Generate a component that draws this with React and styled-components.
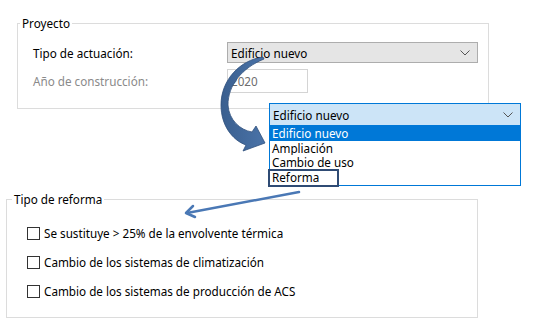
import React from "react";
import styled, { createGlobalStyle } from "styled-components";

const Global = createGlobalStyle`
  html, body { margin: 0; padding: 0; background: #fff; }
  body { font-family: "Noto Sans", "Open Sans", sans-serif; font-size: 11.7px; color: #000; }
`;

const Page = styled.div`
  position: relative;
  width: 543px;
  height: 334px;
  overflow: hidden;
  display: flex;
  flex-direction: column;
  align-items: flex-start;
  padding-top: 16px;
  box-sizing: border-box;
`;

const Group = styled.fieldset`
  margin: ${(p) => p.$margin};
  width: ${(p) => p.$width}px;
  height: ${(p) => p.$height}px;
  box-sizing: border-box;
  border: 1px solid #dcdcdc;
  padding: 0;
  min-width: 0;
`;

const Legend = styled.legend`
  padding: 0 2px;
  margin-left: ${(p) => p.$indent}px;
  line-height: 14px;
  color: #000;
`;

const GroupBody = styled.div`
  padding: ${(p) => p.$padding};
`;

const FormGrid = styled.div`
  display: grid;
  grid-template-columns: 194px 251px;
  row-gap: 6px;
  align-items: center;
`;

const Label = styled.span`
  color: ${(p) => (p.$disabled ? "#8a8a8a" : "#000")};
  line-height: 14px;
`;

const Combo = styled.div`
  height: 21px;
  box-sizing: border-box;
  background: #e5e5e5;
  border: 1px solid #adadad;
  display: flex;
  align-items: center;
  justify-content: space-between;
  padding: 0 7px 0 3px;
`;

const TextBox = styled.div`
  width: 81px;
  height: 24px;
  box-sizing: border-box;
  border: 1px solid #d4d4d4;
  display: flex;
  align-items: center;
  padding-left: 3px;
  color: #6d6d6d;
`;

const Chevron = ({ color = "#555" }) => (
  <svg width="10" height="6" viewBox="0 0 10 6">
    <path d="M0.5 0.5 L5 5 L9.5 0.5" fill="none" stroke={color} strokeWidth="1" />
  </svg>
);

const Popup = styled.div`
  position: absolute;
  left: 269px;
  top: 103px;
  width: 252px;
  box-sizing: border-box;
  border: 1px solid #0078d7;
  background: #fff;
  display: flex;
  flex-direction: column;
`;

const PopupHead = styled.div`
  height: 21px;
  background: #cce4f7;
  border-bottom: 1px solid #0078d7;
  display: flex;
  align-items: center;
  justify-content: space-between;
  padding: 0 7px 0 3px;
`;

const Option = styled.div`
  height: 14.7px;
  line-height: 14px;
  padding-left: 2px;
  background: ${(p) => (p.$selected ? "#0078d7" : "#fff")};
  color: ${(p) => (p.$selected ? "#fff" : "#000")};
`;

const Highlight = styled.div`
  position: absolute;
  left: 268px;
  top: 169px;
  width: 71px;
  height: 18px;
  box-sizing: border-box;
  border: 2px solid #2f4b74;
`;

const CheckList = styled.div`
  display: flex;
  flex-direction: column;
  gap: 13px;
`;

const CheckRow = styled.label`
  display: flex;
  align-items: center;
  gap: 4px;
  height: 16px;
`;

const Box = styled.span`
  width: 13px;
  height: 13px;
  box-sizing: border-box;
  border: 1px solid #333;
  background: #fff;
`;

const Overlay = styled.svg`
  position: absolute;
  left: 0;
  top: 0;
  pointer-events: none;
`;

export default function App() {
  const checks = [
    "Se sustituye > 25% de la envolvente térmica",
    "Cambio de los sistemas de climatización",
    "Cambio de los sistemas de producción de ACS",
  ];
  const options = ["Edificio nuevo", "Ampliación", "Cambio de uso", "Reforma"];
  return (
    <Page>
      <Global />
      <Group $margin="0 0 0 17px" $width={472} $height={93}>
        <Legend $indent={2}>Proyecto</Legend>
        <GroupBody $padding="12px 10px 0 15px">
          <FormGrid>
            <Label>Tipo de actuación:</Label>
            <Combo>
              <span>Edificio nuevo</span>
              <Chevron />
            </Combo>
            <Label $disabled>Año de construcción:</Label>
            <TextBox>2020</TextBox>
          </FormGrid>
        </GroupBody>
      </Group>
      <Group $margin="83px 0 0 6px" $width={472} $height={126}>
        <Legend $indent={5}>Tipo de reforma</Legend>
        <GroupBody $padding="19px 10px 0 20px">
          <CheckList>
            {checks.map((c) => (
              <CheckRow key={c}>
                <Box />
                <span>{c}</span>
              </CheckRow>
            ))}
          </CheckList>
        </GroupBody>
      </Group>

      <Popup>
        <PopupHead>
          <span>Edificio nuevo</span>
          <Chevron />
        </PopupHead>
        {options.map((o, i) => (
          <Option key={o} $selected={i === 0}>{o}</Option>
        ))}
      </Popup>
      <Highlight />

      <Overlay width="543" height="334" viewBox="0 0 543 334">
        <defs>
          <linearGradient id="ag" x1="0" y1="0" x2="1" y2="0">
            <stop offset="0" stopColor="#3a5f8f" />
            <stop offset="1" stopColor="#4a73a8" />
          </linearGradient>
        </defs>
        <path
          d="M263 57 C240 60 221 80 221 105 C221 125 232 140 246 145 L243 151 L265 143 L256 126 L252 132 C240 130 229 120 228 105 C228 85 242 68 264 59 Z"
          fill="url(#ag)"
          stroke="#2e4f7c"
          strokeWidth="0.8"
          strokeLinejoin="round"
        />
        <g stroke="#4a78b5" strokeWidth="2.5" fill="none" strokeLinecap="round" strokeLinejoin="round">
          <path d="M299 192 L187 213" />
          <path d="M195 217 L186 213 L193 206" />
        </g>
      </Overlay>
    </Page>
  );
}
